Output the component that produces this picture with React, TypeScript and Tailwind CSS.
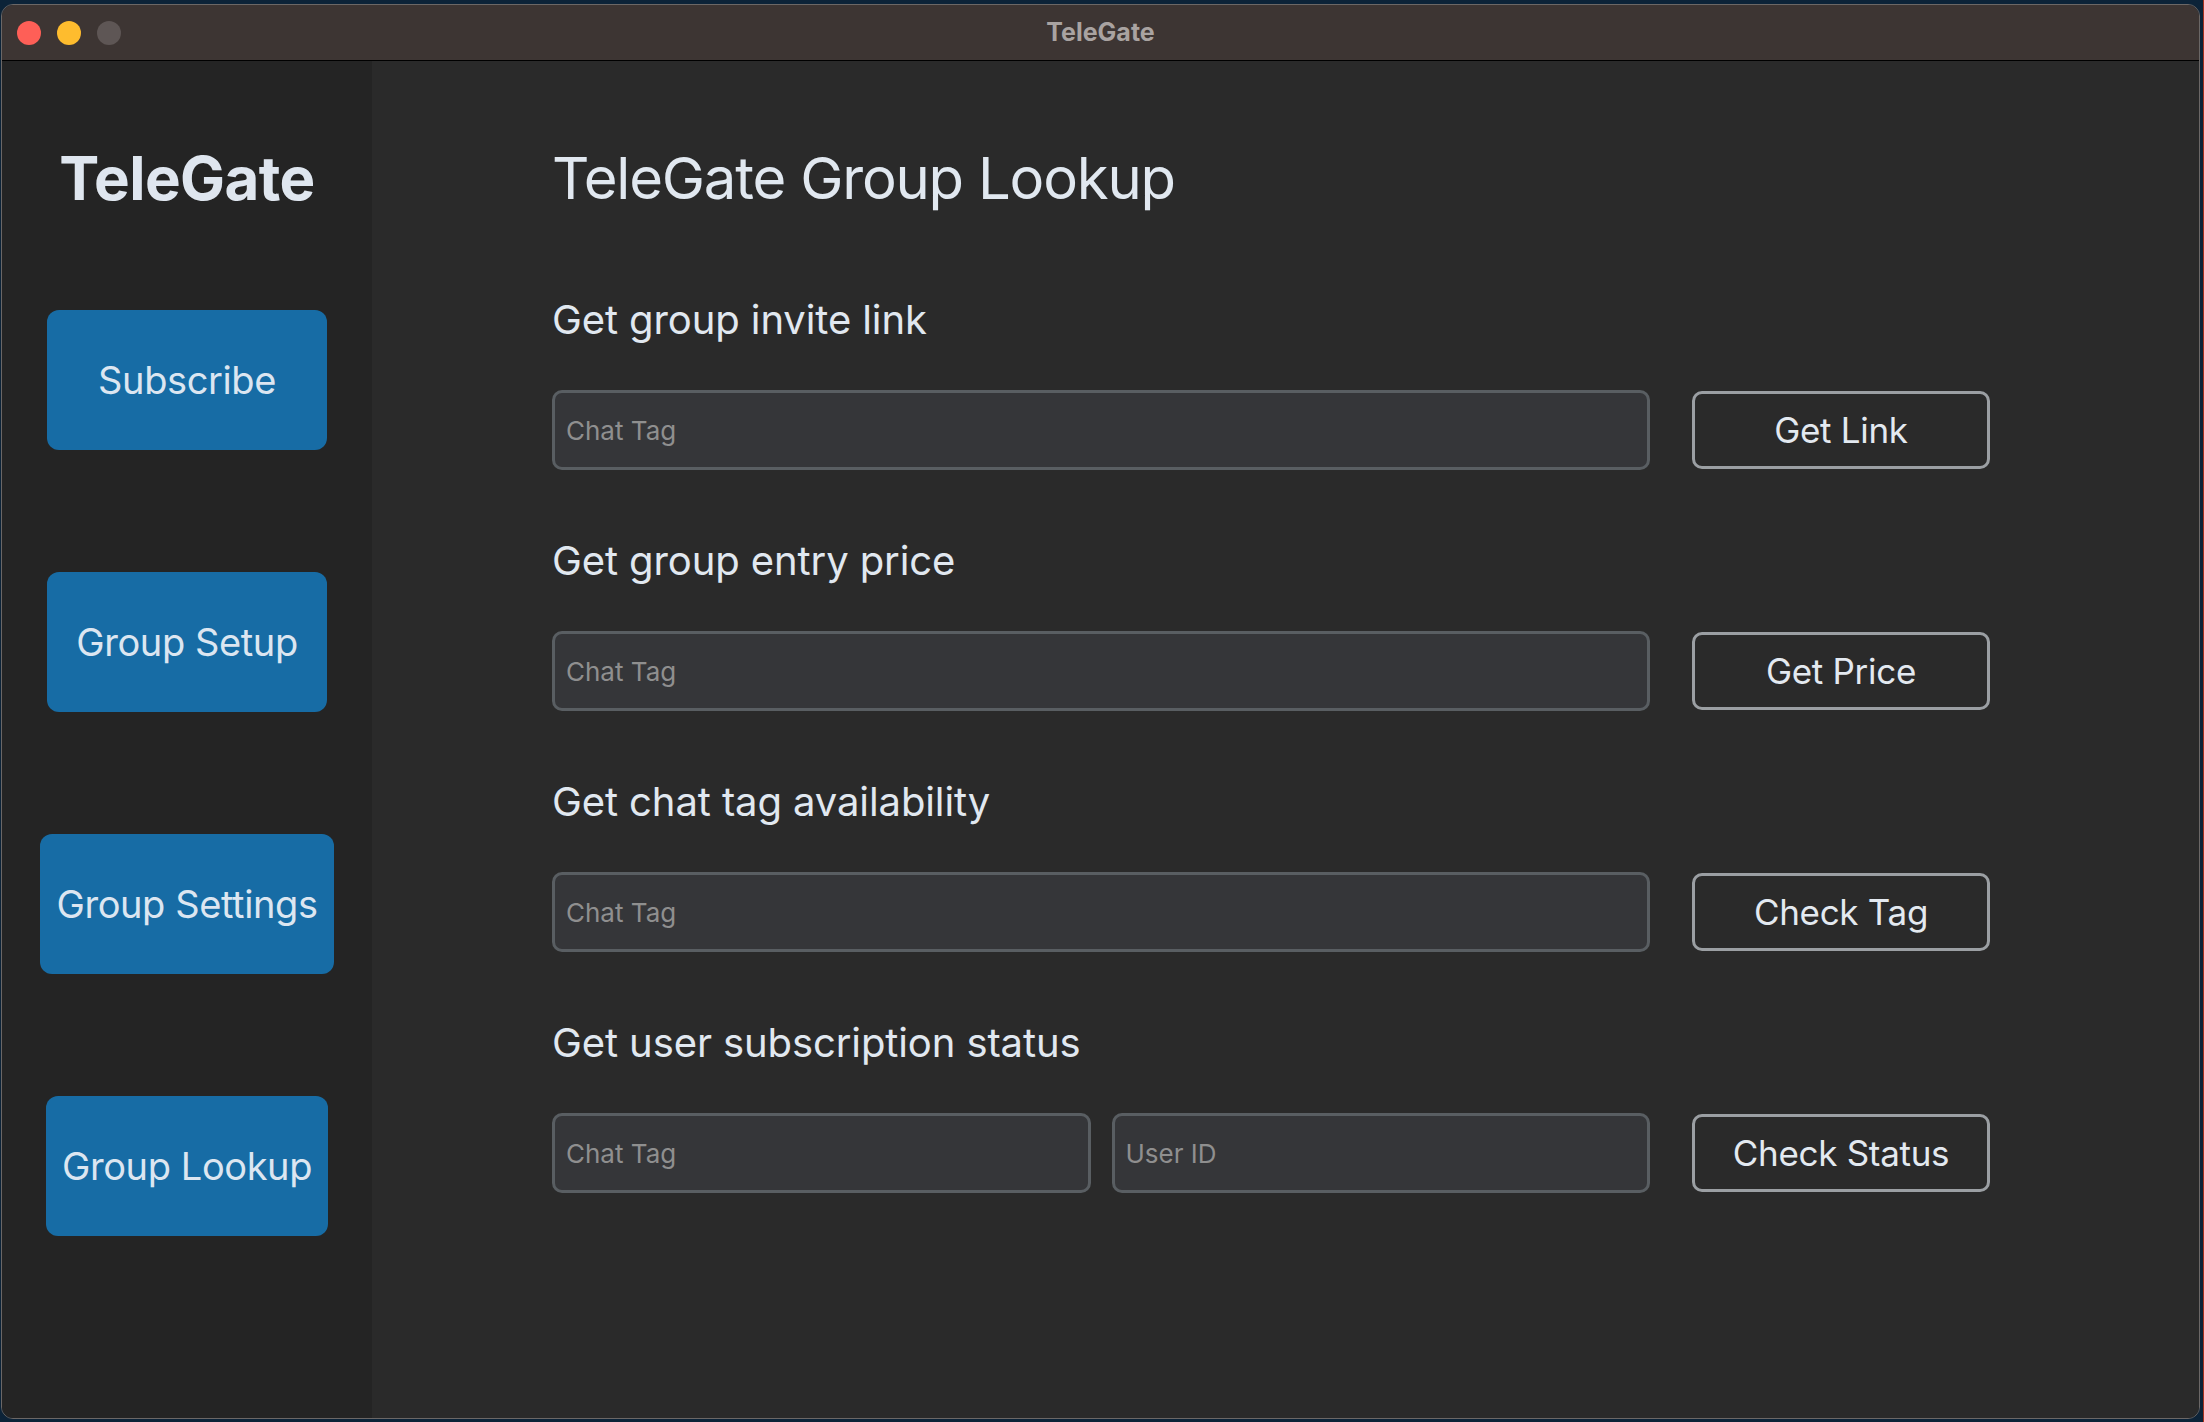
import React, { useState } from 'react';

const navItems = ['Subscribe', 'Group Setup', 'Group Settings', 'Group Lookup'];

interface LookupRowProps {
  title: string;
  fields: string[];
  action: string;
}

const LookupRow: React.FC<LookupRowProps> = ({ title, fields, action }) => {
  const [values, setValues] = useState<string[]>(fields.map(() => ''));

  return (
    <section className="flex flex-col">
      <h2 className="text-[40px] leading-[48px] text-[#e1e8f0] tracking-[-0.1px]">{title}</h2>
      <div className="mt-[46px] flex items-center gap-[42px]">
        <div className="flex w-[1098px] gap-[21px]">
          {fields.map((f, i) => (
            <input
              key={f}
              type="text"
              value={values[i]}
              onChange={(e) => setValues(values.map((v, j) => (j === i ? e.target.value : v)))}
              placeholder={f}
              className="h-[80px] min-w-0 flex-1 rounded-[10px] border-[3px] border-[#595e62] bg-[#353639] px-[11px] text-[26px] text-[#e1e8f0] placeholder-[#8f8f8f] outline-none"
            />
          ))}
        </div>
        <button className="h-[78px] w-[298px] rounded-[10px] border-[3px] border-[#9b9fa3] text-[35px] tracking-[-0.3px] text-[#e3e9f0]">
          {action}
        </button>
      </div>
    </section>
  );
};

export default function App() {
  const [active, setActive] = useState('Group Lookup');

  return (
    <div className="flex h-[1422px] w-full bg-[#0c2338] font-['Inter',sans-serif]">
      <div className="flex flex-1 flex-col pt-[4px] pl-[1px] pb-[3px] pr-[3px]">
        <div className="flex flex-1 flex-col overflow-hidden rounded-[12px] border border-[#6b6766]">
          {/* title bar */}
          <div className="relative flex h-[56px] shrink-0 items-center border-b border-black bg-[#3d3533] px-[15px]">
            <div className="flex gap-[16px]">
              <span className="h-[24px] w-[24px] rounded-full bg-[#fe5f57]" />
              <span className="h-[24px] w-[24px] rounded-full bg-[#febc2e]" />
              <span className="h-[24px] w-[24px] rounded-full bg-[#5e5655]" />
            </div>
            <div className="pointer-events-none absolute inset-x-0 text-center text-[25px] font-bold text-[#a9a3a1]">
              TeleGate
            </div>
          </div>

          <div className="flex flex-1">
            {/* sidebar */}
            <aside className="flex w-[370px] shrink-0 flex-col items-center bg-[#242424]">
              <h1 className="mt-[81px] text-[60px] font-bold leading-[72px] tracking-[-0.6px] text-[#dfe6ef]">TeleGate</h1>
              <nav className="mt-[96px] flex flex-col items-center gap-[122px]">
                {navItems.map((item) => (
                  <button
                    key={item}
                    onClick={() => setActive(item)}
                    className={`h-[140px] min-w-[280px] rounded-[12px] px-[16px] text-[38px] tracking-[-0.4px] text-[#dce6f1] ${
                      active === item ? 'bg-[#176ca5]' : 'bg-[#176ca5]'
                    }`}
                  >
                    {item}
                  </button>
                ))}
              </nav>
            </aside>

            {/* main */}
            <main className="flex flex-1 flex-col bg-[#2a2a2a] pl-[180px]">
              <h1 className="mt-[81px] text-[58px] leading-[72px] tracking-[-1.2px] text-[#e1e8f0]">
                TeleGate Group Lookup
              </h1>
              <div className="mt-[82px] flex flex-col gap-[67px]">
                <LookupRow title="Get group invite link" fields={['Chat Tag']} action="Get Link" />
                <LookupRow title="Get group entry price" fields={['Chat Tag']} action="Get Price" />
                <LookupRow title="Get chat tag availability" fields={['Chat Tag']} action="Check Tag" />
                <LookupRow title="Get user subscription status" fields={['Chat Tag', 'User ID']} action="Check Status" />
              </div>
            </main>
          </div>
        </div>
      </div>
      <div className="w-[1px] bg-[#a8321f]" />
    </div>
  );
}
